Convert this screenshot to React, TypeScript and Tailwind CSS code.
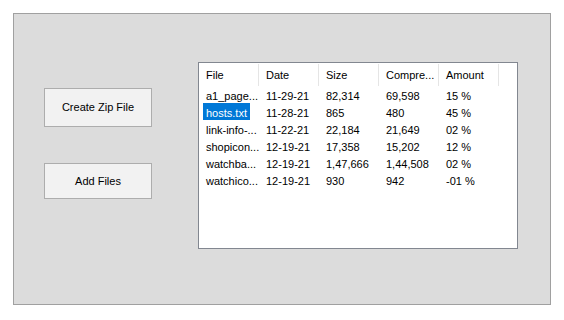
const columns = ['File', 'Date', 'Size', 'Compre...', 'Amount'];

const rows = [
  ['a1_page...', '11-29-21', '82,314', '69,598', '15 %'],
  ['hosts.txt', '11-28-21', '865', '480', '45 %'],
  ['link-info-...', '11-22-21', '22,184', '21,649', '02 %'],
  ['shopicon...', '12-19-21', '17,358', '15,202', '12 %'],
  ['watchba...', '12-19-21', '1,47,666', '1,44,508', '02 %'],
  ['watchico...', '12-19-21', '930', '942', '-01 %'],
];

export default function App() {
  return (
    <div className="w-[564px] h-[320px] bg-white p-[13px] font-['Liberation_Sans',Arial,sans-serif] text-[11px] text-black">
      <div className="w-[538px] h-[292px] bg-[#dcdcdc] border border-[#a0a0a0] flex items-start">
        {/* Buttons */}
        <div className="ml-[30px] mt-[74px] flex flex-col gap-[36px]">
          <button className="w-[108px] h-[39px] bg-[#f2f2f2] border border-[#adadad]">
            Create Zip File
          </button>
          <button className="w-[108px] h-[36px] bg-[#f2f2f2] border border-[#adadad]">
            Add Files
          </button>
        </div>

        {/* List view */}
        <div className="ml-[46px] mt-[48px] w-[320px] h-[187px] bg-white border border-[#828790]">
          <div className="flex h-[23px] items-center">
            {columns.map((c) => (
              <div key={c} className="w-[60px] h-[22px] mt-[1px] pl-[7px] flex items-center whitespace-nowrap border-r border-[#e5e5e5]">
                {c}
              </div>
            ))}
          </div>
          {rows.map((r, i) => (
            <div key={i} className="flex h-[17px]">
              {r.map((cell, j) => (
                <div
                  key={j}
                  className={
                    j === 0
                      ? 'w-[60px] pl-[4px] h-[17px] leading-[20px] whitespace-nowrap'
                      : 'w-[60px] pl-[7px] h-[17px] leading-[20px] whitespace-nowrap'
                  }
                >
                  <span
                    className={
                      j === 0 && i === 1
                        ? 'inline-block h-[17px] px-[3px] bg-[#0078d7] text-white'
                        : j === 0
                          ? 'inline-block px-[3px]'
                          : ''
                    }
                  >
                    {cell}
                  </span>
                </div>
              ))}
            </div>
          ))}
        </div>
      </div>
    </div>
  );
}
